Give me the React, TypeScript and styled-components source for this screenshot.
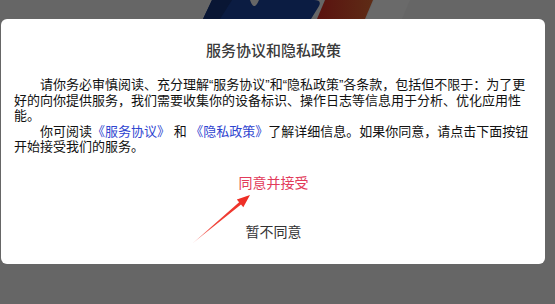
import styled, { createGlobalStyle } from 'styled-components';

const GlobalStyle = createGlobalStyle`
  html, body {
    margin: 0;
    padding: 0;
    background: #666666;
  }
  * {
    box-sizing: border-box;
  }
`;

const Backdrop = styled.div`
  position: relative;
  width: 555px;
  height: 304px;
  padding: 19px 0 0 1px;
  background: #666666;
  overflow: hidden;
`;

const Logo = styled.svg`
  position: absolute;
  left: 0;
  top: 0;
`;

const Dialog = styled.div`
  position: relative;
  z-index: 1;
  display: flex;
  flex-direction: column;
  width: 544px;
  height: 245px;
  padding: 21px 12px 0 13px;
  background: #ffffff;
  border-radius: 6px;
`;

const Title = styled.h2`
  margin: 0;
  text-align: center;
  color: #3a3a3a;
  font-family: "Noto Sans CJK SC", sans-serif;
  font-size: 15px;
  font-weight: 500;
  line-height: 20px;
`;

const Body = styled.div`
  width: 519px;
  margin-top: 17px;
  color: #111111;
  font-family: "Liberation Sans", "Noto Sans CJK SC", sans-serif;
  font-size: 13px;
  line-height: 15.5px;
`;

const Paragraph = styled.p`
  margin: 0;
  text-indent: 26px;
`;

const Link = styled.a`
  color: #2f45d0;
  text-decoration: none;
`;

const Actions = styled.div`
  display: flex;
  flex-direction: column;
  align-items: center;
  gap: 29px;
  margin-top: 17px;
`;

const ActionButton = styled.button<{ $primary?: boolean }>`
  padding: 0;
  border: none;
  background: none;
  color: ${(p) => (p.$primary ? '#e23b5a' : '#333333')};
  font-family: "Noto Sans CJK SC", sans-serif;
  font-size: 14px;
  line-height: 20px;
  cursor: pointer;
`;

const Arrow = styled.svg`
  position: absolute;
  left: 188px;
  top: 190px;
  z-index: 2;
`;

function App(): JSX.Element {
  return (
    <>
      <GlobalStyle />
      <Backdrop>
        <Logo width="555" height="24" viewBox="0 0 555 24">
          <defs>
            <linearGradient id="redStripe" x1="0" y1="0" x2="1" y2="0">
              <stop offset="0" stopColor="#5a120f" />
              <stop offset="1" stopColor="#5e2c16" />
            </linearGradient>
          </defs>
          <path d="M212,0 L250,0 Q254,12 259,0 L314,0 Q322,0 319,6 L311,19 L203,19 Z" fill="#0b1c42" />
          <path d="M212,0 L232,0 L220,19 L203,19 Z" fill="#091634" />
          <polygon points="325,0 373,0 365,19 317,19" fill="url(#redStripe)" />
          <polygon points="374,0 410,0 402,19 366,19" fill="#6a6a6a" />
        </Logo>
        <Dialog>
          <Title>服务协议和隐私政策</Title>
          <Body>
            <Paragraph>
              请你务必审慎阅读、充分理解“服务协议”和“隐私政策”各条款，包括但不限于：为了更好的向你提供服务，我们需要收集你的设备标识、操作日志等信息用于分析、优化应用性能。
            </Paragraph>
            <Paragraph>
              你可阅读<Link href="#">《服务协议》</Link> 和 <Link href="#">《隐私政策》</Link>了解详细信息。如果你同意，请点击下面按钮开始接受我们的服务。
            </Paragraph>
          </Body>
          <Actions>
            <ActionButton $primary>同意并接受</ActionButton>
            <ActionButton>暂不同意</ActionButton>
          </Actions>
        </Dialog>
        <Arrow width="66" height="58" viewBox="188 190 66 58">
          <defs>
            <linearGradient id="arrowFill" gradientUnits="userSpaceOnUse" x1="193" y1="243" x2="250" y2="195">
              <stop offset="0" stopColor="#f7a3a0" />
              <stop offset="0.35" stopColor="#f0463c" />
              <stop offset="1" stopColor="#ee2a22" />
            </linearGradient>
          </defs>
          <polygon
            points="193,243 239.1,202.2 236.8,199.5 250,195 243.3,207.2 241.0,204.5"
            fill="url(#arrowFill)"
          />
        </Arrow>
      </Backdrop>
    </>
  );
}

export default App;
